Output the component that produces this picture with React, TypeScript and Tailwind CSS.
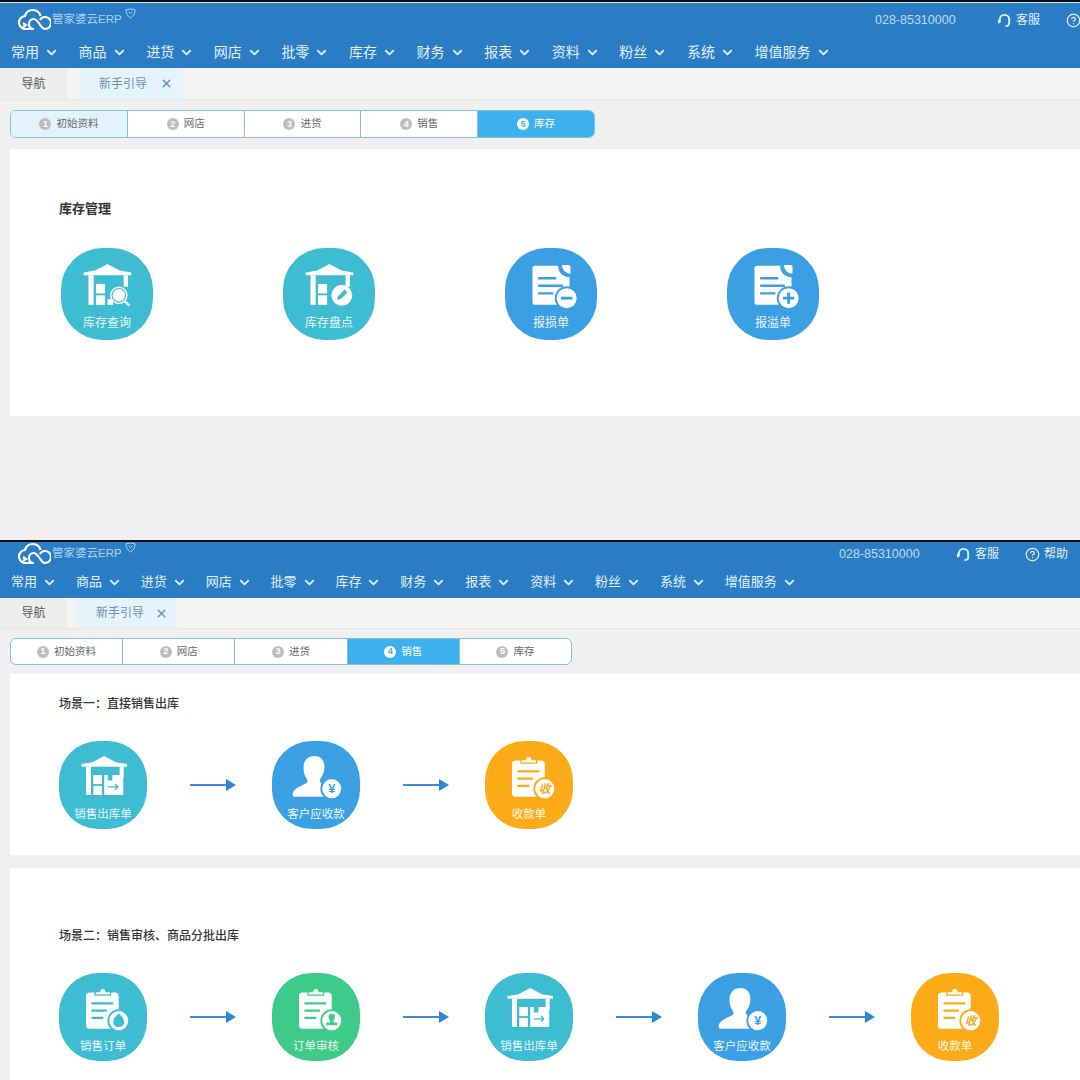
import React from 'react';
import { ChevronDown, CircleHelp, X } from 'lucide-react';

const TEAL = '#3dbcd2';
const BLUE = '#3b9fe3';
const ORANGE = '#fbab18';
const GREEN = '#3ecb8a';

const NAV = ['常用', '商品', '进货', '网店', '批零', '库存', '财务', '报表', '资料', '粉丝', '系统', '增值服务'];
const STEPS = ['初始资料', '网店', '进货', '销售', '库存'];
const FONT = "font-['Liberation_Sans','Noto_Sans_CJK_SC',sans-serif]";

const Badge = ({ color, children }: { color: string; children?: React.ReactNode }) => (
  <g>
    <circle cx="47" cy="37" r="12.5" fill={color} />
    <circle cx="47" cy="37" r="10.5" fill="#fff" />
    {children}
  </g>
);

const Warehouse = ({ color, children }: { color: string; children?: React.ReactNode }) => (
  <g>
    <path d="M6 13v-3l12-2 13-7 13 7 12 2v3z" fill="#fff" />
    <rect x="11" y="13" width="5.5" height="31" fill="#fff" />
    <rect x="48" y="13" width="4.5" height="12" fill="#fff" />
    <rect x="19" y="22" width="9.5" height="10" fill="#fff" />
    <rect x="19" y="34" width="9.5" height="10" fill="#fff" />
    {children}
  </g>
);

const Doc = ({ color, minus }: { color: string; minus?: boolean }) => (
  <g>
    <path d="M14 3h24c0 7 5 12 12 12v26c0 2-1 3-3 3H14c-2 0-3-1-3-3V6c0-2 1-3 3-3z" fill="#fff" />
    <path d="M42 2c0 5 4 9 9 9V4c0-1-1-2-2-2z" fill="#fff" />
    <path d="M17 16h19M17 24h26M17 32h16" stroke={color} strokeWidth="2.5" />
    <Badge color={color}>
      <path d={minus ? 'M41 37h12' : 'M41 37h12M47 31v12'} stroke={color} strokeWidth="3" />
    </Badge>
  </g>
);

const Clipboard = ({ color, children }: { color: string; children?: React.ReactNode }) => (
  <g>
    <rect x="11" y="6" width="36" height="40" rx="4" fill="#fff" />
    <path d="M21 9V5h5a3.500 3.500 0 0 1 7 0h5v4z" fill="#fff" stroke={color} strokeWidth="1.500" />
    <path d="M17 18h24M17 26h17M17 34h13" stroke={color} strokeWidth="2.500" />
    <Badge color={color}>{children}</Badge>
  </g>
);

const ICONS: Record<string, (color: string) => React.ReactNode> = {
  search: c => (
    <Warehouse color={c}>
      <circle cx="43" cy="34" r="7" fill="#fff" stroke={c} strokeWidth="1" />
      <circle cx="43" cy="34" r="8.500" fill="none" stroke="#fff" strokeWidth="1.500" />
      <path d="M49 40l5 5" stroke="#fff" strokeWidth="2.500" />
      <rect x="31" y="38" width="6" height="6" fill="#fff" />
    </Warehouse>
  ),
  check: c => (
    <Warehouse color={c}>
      <circle cx="44" cy="34" r="11" fill="#fff" />
      <path d="M39 39l1-4 7-7 3 3-7 7z" fill={c} />
    </Warehouse>
  ),
  minus: c => <Doc color={c} minus />,
  plus: c => <Doc color={c} />,
  out: c => (
    <Warehouse color={c}>
      <rect x="31" y="22" width="21" height="22" fill="#fff" />
      <path d="M35 22h5v6h-5z" fill={c} />
      <path d="M35 35h11m-3-3l3 3-3 3" stroke={c} strokeWidth="1.500" fill="none" />
    </Warehouse>
  ),
  person: c => (
    <g>
      <path d="M28 1c7 0 11 5 11 12 0 6-2 10-5 14-1 3 2 5 5 6l3 1c-4 3-5 8-3 12H7c-3 0-4-3-2-6 3-4 8-6 12-8 3-1 4-3 3-5-3-4-4-8-4-14C16 6 21 1 28 1z" fill="#fff" />
      <Badge color={c}>
        <text x="47" y="42" textAnchor="middle" fontSize="14" fontWeight="700" fill={c} fontFamily="Liberation Sans">¥</text>
      </Badge>
    </g>
  ),
  bill: c => (
    <Clipboard color={c}>
      <text x="47" y="42" textAnchor="middle" fontSize="13" fontWeight="700" fontStyle="italic" fill={c} fontFamily="Noto Sans CJK SC">收</text>
    </Clipboard>
  ),
  order: c => (
    <Clipboard color={c}>
      <path d="M47 29l5 5 1 5c0 3-3 5-6 5s-6-2-6-5l1-5z" fill={c} />
    </Clipboard>
  ),
  audit: c => (
    <Clipboard color={c}>
      <circle cx="47" cy="33" r="3.500" fill={c} />
      <path d="M45 36h4v3h4v3H41v-3h4z" fill={c} />
    </Clipboard>
  ),
};

const AppIcon = ({ label, icon, color, large }: { label: string; icon: string; color: string; large?: boolean }) => (
  <div
    className={`flex shrink-0 flex-col items-center rounded-[45%] text-white ${large ? 'h-[92px] w-[92px] pt-[15px]' : 'h-[88px] w-[88px] pt-[14px]'}`}
    style={{ backgroundColor: color }}
  >
    <svg viewBox="0 0 60 50" className="w-[62%]">{ICONS[icon](color)}</svg>
    <span className={`whitespace-nowrap leading-[14px] opacity-90 ${large ? 'mt-[5px] text-[12px]' : 'mt-[7px] text-[11.5px]'}`}>{label}</span>
  </div>
);

const Arrow = () => (
  <div className="flex h-[88px] w-[125px] shrink-0 items-center pl-[43px]">
    <svg width="46" height="12" viewBox="0 0 46 12">
      <path d="M0 6h36" stroke="#3a8fd8" strokeWidth="2" />
      <path d="M36 0l10 6-10 6z" fill="#2f86d6" />
    </svg>
  </div>
);

const CloudLogo = () => (
  <svg width="34" height="24" viewBox="0 0 34 24" fill="none" stroke="#fff" strokeWidth="2.200">
    <path d="M9 21a6.500 6.500 0 0 1-1-13c1-4 4-6 8-6s7 3 7.500 6M17 21c-3 0-5-2-5-5s2-5 4.500-5 4 2 6 5 3 5 5.500 5a6 6 0 0 0 0-12c-2 0-4 1-5 3" />
    <path d="M9 21h8M6 15l3 2-3 2" />
  </svg>
);

const Headset = () => (
  <svg width="15" height="15" viewBox="0 0 16 16" fill="none" stroke="currentColor" strokeWidth="2">
    <path d="M3 10V7a5 5 0 0 1 10 0v4c0 2-2 3-4 3" />
    <rect x="1" y="7" width="2" height="4" fill="currentColor" stroke="none" />
  </svg>
);

const Header = ({ wide }: { wide?: boolean }) => (
  <>
    <div className="h-[2px] bg-[#0c0f14]" />
    <div className={`overflow-hidden bg-[#2a7dc4] ${wide ? 'h-[66px] border-t border-[#dbe8f2]' : 'h-[56px]'}`}>
      <div className={`flex items-center text-[#bddcf3] ${wide ? 'h-[34px]' : 'h-[24px]'}`}>
        <div className={`flex shrink-0 items-center pl-[17px] ${wide ? 'w-[875px]' : 'w-[839px]'}`}>
          <CloudLogo />
          <span className="ml-[1px] text-[11.5px] opacity-90">管家婆云ERP</span>
          <svg width="11" height="11" viewBox="0 0 12 12" fill="none" stroke="#bddcf3" strokeWidth="1" className="mb-[14px] ml-[3px]">
            <path d="M1 2l5-1 5 1c0 4-2 7-5 9-3-2-5-5-5-9zM4 4l2 2 2-2" />
          </svg>
        </div>
        <span className="w-[81px] shrink-0 text-[12.5px]">028-85310000</span>
        <div className={`flex shrink-0 items-center gap-[4px] text-[12px] text-[#e3f0fa] ${wide ? 'ml-[41px]' : 'ml-[36px]'}`}>
          <Headset />
          <span>客服</span>
        </div>
        {wide ? (
          <CircleHelp size={15} className="ml-[26px] shrink-0 text-[#e3f0fa]" />
        ) : (
          <div className="ml-[26px] flex shrink-0 items-center gap-[4px] text-[12px] text-[#e3f0fa]">
            <CircleHelp size={15} />
            <span>帮助</span>
          </div>
        )}
      </div>
      <nav className={`flex items-center pl-[11px] text-[#e3f0fa] ${wide ? 'h-[31px] text-[14px]' : 'h-[32px] text-[13px]'}`}>
        {NAV.map(item => (
          <div key={item} className={`flex shrink-0 items-center gap-[5px] ${item === '增值服务' ? '' : wide ? 'w-[67.6px]' : 'w-[64.9px]'}`}>
            <span>{item}</span>
            <ChevronDown size={15} strokeWidth={3} />
          </div>
        ))}
      </nav>
    </div>
  </>
);

const Tabs = ({ wide }: { wide?: boolean }) => (
  <div className={`flex border-b border-[#e6e6e6] bg-[#f4f4f4] text-[12px] ${wide ? 'h-[32px]' : 'h-[31px]'}`}>
    <div className="flex w-[67px] items-center justify-center bg-[#eeeeee] text-[#555]">导航</div>
    <div className={`flex items-center bg-[#e6f3fb] text-[#6b90ad] ${wide ? 'ml-[13px] w-[103px] pl-[19px]' : 'ml-[10px] w-[100px] pl-[19px]'}`}>
      <span>新手引导</span>
      <X size={13} strokeWidth={2.500} className={wide ? 'ml-[13px] text-[#5b8fc0]' : 'ml-[11px] text-[#5b8fc0]'} />
    </div>
  </div>
);

const Steps = ({ active, wide }: { active: number; wide?: boolean }) => (
  <div className={wide ? 'pb-[11px] pl-[10px] pt-[10px]' : 'pb-[9px] pl-[10px] pt-[9px]'}>
    <div className={`flex overflow-hidden rounded-[6px] border border-[#86c0d8] bg-white ${wide ? 'h-[28px] w-[585px]' : 'h-[27px] w-[562px]'}`}>
      {STEPS.map((step, i) => (
        <div
          key={step}
          className={`flex flex-1 items-center justify-center gap-[5px] border-r border-[#86c0d8] text-[10.5px] last:border-r-0 ${
            i === active ? 'bg-[#3db1ee] text-white' : i === 0 && wide ? 'bg-[#e3f2fb] text-[#666]' : 'text-[#666]'
          }`}
        >
          <span
            className={`flex h-[12px] w-[12px] items-center justify-center rounded-full text-[9px] font-bold leading-none ${
              i === active ? 'bg-white text-[#3db1ee]' : 'bg-[#bdbdbd] text-white'
            }`}
          >
            {i + 1}
          </span>
          <span>{step}</span>
        </div>
      ))}
    </div>
  </div>
);

const SectionTitle = ({ children, bold }: { children: string; bold?: boolean }) => (
  <h3 className={`pl-[49px] leading-[16px] text-[#333] ${bold ? 'text-[13px] font-bold' : 'text-[12px] font-medium'}`}>{children}</h3>
);

export default function App() {
  return (
    <div className={`h-[1080px] w-[1080px] overflow-hidden bg-[#f0f0f0] ${FONT}`}>
      {/* 库存 */}
      <section className="h-[540px] overflow-hidden">
        <Header wide />
        <Tabs wide />
        <Steps active={4} wide />
        <div className="ml-[10px] h-[267px] bg-white pt-[52px]">
          <SectionTitle bold>库存管理</SectionTitle>
          <div className="mt-[31px] flex gap-[130px] pl-[51px]">
            <AppIcon large label="库存查询" icon="search" color={TEAL} />
            <AppIcon large label="库存盘点" icon="check" color={TEAL} />
            <AppIcon large label="报损单" icon="minus" color={BLUE} />
            <AppIcon large label="报溢单" icon="plus" color={BLUE} />
          </div>
        </div>
      </section>

      {/* 销售 */}
      <section>
        <Header />
        <Tabs />
        <Steps active={3} />
        <div className="ml-[10px] h-[181px] bg-white pt-[22px]">
          <SectionTitle>场景一：直接销售出库</SectionTitle>
          <div className="mt-[29px] flex pl-[49px]">
            <AppIcon label="销售出库单" icon="out" color={TEAL} />
            <Arrow />
            <AppIcon label="客户应收款" icon="person" color={BLUE} />
            <Arrow />
            <AppIcon label="收款单" icon="bill" color={ORANGE} />
          </div>
        </div>
        <div className="ml-[10px] mt-[13px] h-[212px] bg-white pt-[60px]">
          <SectionTitle>场景二：销售审核、商品分批出库</SectionTitle>
          <div className="mt-[29px] flex pl-[49px]">
            <AppIcon label="销售订单" icon="order" color={TEAL} />
            <Arrow />
            <AppIcon label="订单审核" icon="audit" color={GREEN} />
            <Arrow />
            <AppIcon label="销售出库单" icon="out" color={TEAL} />
            <Arrow />
            <AppIcon label="客户应收款" icon="person" color={BLUE} />
            <Arrow />
            <AppIcon label="收款单" icon="bill" color={ORANGE} />
          </div>
        </div>
      </section>
    </div>
  );
}
